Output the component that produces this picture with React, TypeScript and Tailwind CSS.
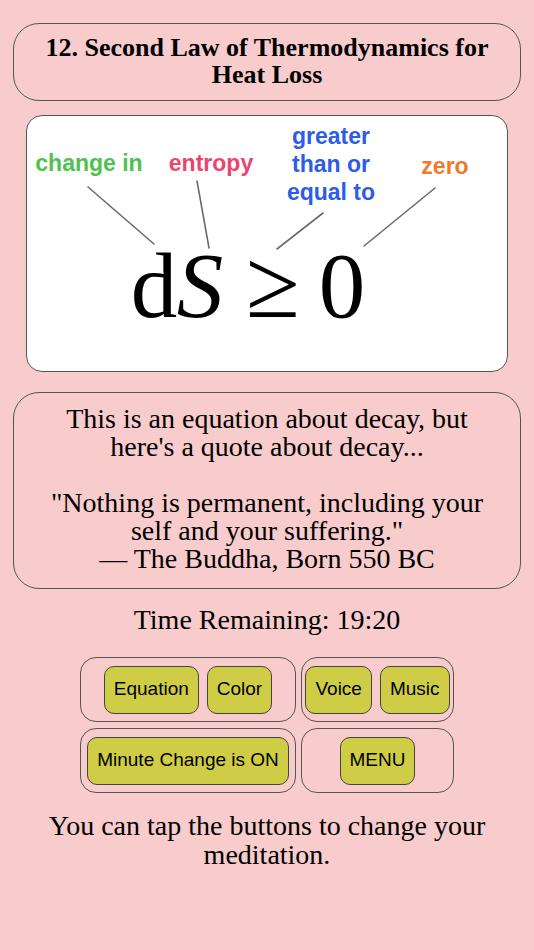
import React from 'react'

const serif = { fontFamily: '"Liberation Serif", "DejaVu Serif", serif' }
const sans = { fontFamily: '"Liberation Sans", Arial, sans-serif' }

function EquationPicture() {
  return (
    <svg viewBox="0 0 480 255" className="w-full h-full">
      <g fontFamily='"Liberation Sans", Arial, sans-serif' fontWeight="bold" fontSize="23" textAnchor="middle">
        <text x="62" y="55" fill="#4ec24f">change in</text>
        <text x="184" y="55" fill="#e9466f">entropy</text>
        <text x="304" y="28" fill="#2c5ce9">greater</text>
        <text x="304" y="56" fill="#2c5ce9">than or</text>
        <text x="304" y="84" fill="#2c5ce9">equal to</text>
        <text x="418" y="58" fill="#f07a2c">zero</text>
      </g>
      <g stroke="#6b6b6b" strokeWidth="1.6" strokeLinecap="round">
        <line x1="61" y1="71" x2="127" y2="128" />
        <line x1="170" y1="65" x2="182" y2="132" />
        <line x1="296" y1="97" x2="250" y2="133" />
        <line x1="408" y1="72" x2="337" y2="130" />
      </g>
      <g fontFamily='"Liberation Serif", "Times New Roman", serif' fontSize="93" fill="#000" textAnchor="middle">
        <text x="127" y="201">d</text>
        <text x="173" y="201" fontStyle="italic">S</text>
        <text x="246" y="201" fontSize="98">≥</text>
        <text x="315" y="201">0</text>
      </g>
    </svg>
  )
}

function Btn({ children }: { children: React.ReactNode }) {
  return (
    <button
      className="h-[48px] px-[9px] rounded-[10px] border border-[#444] bg-[#cfcd45] text-[19px] text-black"
      style={sans}
    >
      {children}
    </button>
  )
}

function Group({ children }: { children: React.ReactNode }) {
  return (
    <div className="flex items-center justify-center gap-[8px] rounded-[16px] border border-[#555] h-[65px]">
      {children}
    </div>
  )
}

export default function App() {
  return (
    <div className="min-h-[950px] w-[534px] bg-[#f8cccc] flex flex-col items-center text-black overflow-hidden" style={serif}>
      <div className="mt-[23px] w-[508px] h-[78px] rounded-[26px] border border-[#555] flex items-center justify-center pb-[2px]">
        <h1 className="text-center font-bold text-[26px] leading-[27px]">
          12. Second Law of Thermodynamics for
          <br />
          Heat Loss
        </h1>
      </div>

      <div className="mt-[14px] w-[482px] h-[257px] rounded-[16px] border border-[#555] bg-white overflow-hidden">
        <EquationPicture />
      </div>

      <div className="mt-[20px] w-[508px] h-[197px] rounded-[26px] border border-[#555] pt-[12px] text-center text-[28px] leading-[28px]">
        <p>This is an equation about decay, but</p>
        <p>here's a quote about decay...</p>
        <p>&nbsp;</p>
        <p>"Nothing is permanent, including your</p>
        <p>self and your suffering."</p>
        <p>— The Buddha, Born 550 BC</p>
      </div>

      <p className="mt-[17px] text-[28px] leading-[28px]">Time Remaining: 19:20</p>

      <div className="mt-[23px] grid grid-cols-[216px_153px] gap-x-[5px] gap-y-[6px]">
        <Group>
          <Btn>Equation</Btn>
          <Btn>Color</Btn>
        </Group>
        <Group>
          <Btn>Voice</Btn>
          <Btn>Music</Btn>
        </Group>
        <Group>
          <Btn>Minute Change is ON</Btn>
        </Group>
        <Group>
          <Btn>MENU</Btn>
        </Group>
      </div>

      <p className="mt-[18px] w-[480px] text-center text-[28px] leading-[29px]">
        You can tap the buttons to change your meditation.
      </p>
    </div>
  )
}
